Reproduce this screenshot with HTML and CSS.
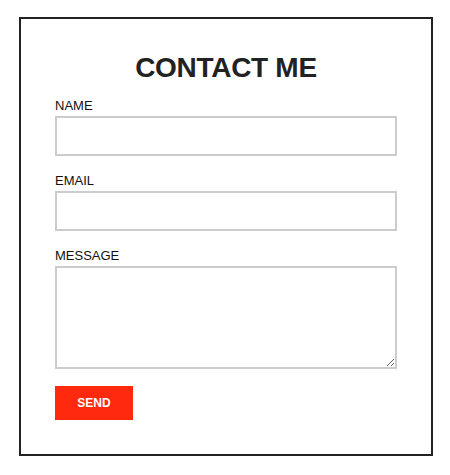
FILE: index.html
```html
<!DOCTYPE html>
<html lang="en">
<head>
    <meta charset="UTF-8">
    <meta name="viewport" content="width=device-width, initial-scale=1.0">
    <title>Contact Me</title>
    <link rel="stylesheet" href="styles.css">
</head>
<body>
    <div class="contact-box">
        <h1>CONTACT ME</h1>
        <form class="contact-form">
            <div class="field">
                <label for="name">NAME</label>
                <input type="text" id="name">
            </div>
            <div class="field">
                <label for="email">EMAIL</label>
                <input type="email" id="email">
            </div>
            <div class="field">
                <label for="message">MESSAGE</label>
                <textarea id="message"></textarea>
            </div>
            <button type="button" class="send-button">SEND</button>
        </form>
    </div>
</body>
</html>
```

FILE: styles.css
```css
body, html {
    margin: 0;
    padding: 0;
    background-color: #fff;
    font-family: 'Liberation Sans', Arial, sans-serif;
}
body {
    padding: 17px 0 0 19px;
}
.contact-box {
    width: 342px;
    border: 2px solid #222;
    padding: 33px 34px 34px 34px;
}
h1 {
    margin: 0 0 14px 0;
    font-size: 28px;
    font-weight: bold;
    letter-spacing: -0.3px;
    color: #222;
    text-align: center;
}
.field {
    margin-bottom: 17px;
}
label {
    display: block;
    font-size: 13px;
    line-height: 15px;
    color: #111;
    margin-bottom: 3px;
}
input, textarea {
    display: block;
    box-sizing: border-box;
    width: 342px;
    height: 40px;
    margin: 0;
    border: 2px solid #ccc;
    font-family: inherit;
    font-size: 14px;
    padding: 6px;
}
textarea {
    height: 103px;
}
.send-button {
    display: block;
    width: 78px;
    height: 34px;
    background-color: #ff2a0e;
    color: white;
    border: none;
    font-family: inherit;
    font-size: 12px;
    font-weight: bold;
    cursor: pointer;
}
```
